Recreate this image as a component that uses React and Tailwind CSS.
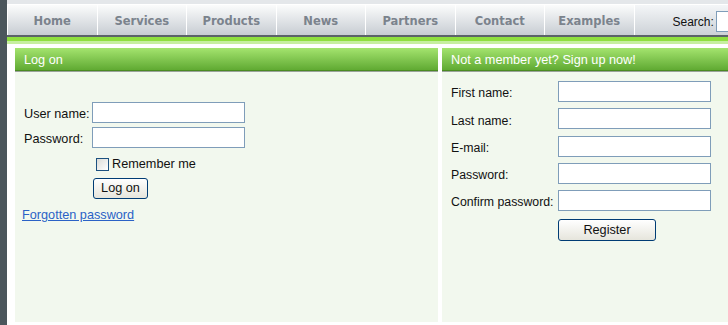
import React from "react";

const tabs = ["Home", "Services", "Products", "News", "Partners", "Contact", "Examples"];

const Field = ({ label, labelWidth, size = "text-[12.7px]" }) => (
  <div className="flex items-center">
    <span className={`${labelWidth} ${size} translate-y-[2px] text-[#111]`}>{label}</span>
    <input className="h-[21px] w-[153px] border border-[#7f9db9] bg-white outline-none" />
  </div>
);

const PanelHeader = ({ children }) => (
  <div className="h-[23px] border-b border-[#4b8a22] bg-gradient-to-b from-[#a4e46e] to-[#60aa32] pl-[9px] text-[12.7px] leading-[25px] text-white shadow-[0_1px_0_#9aa39a]">
    {children}
  </div>
);

export default function App() {
  return (
    <div className="flex h-[325px] w-[728px] overflow-hidden bg-white font-['Liberation_Sans',Arial,sans-serif]">
      <div className="w-[7px] shrink-0 bg-[#4b565c]" />
      <div className="flex min-w-0 flex-1 flex-col">
        <div className="h-[4px] bg-[#e4e7ea]" />
        <div className="flex h-[31px] border-l border-t border-white bg-gradient-to-b from-[#f4f6f8] to-[#cdd2d7]">
          {tabs.map((t) => (
            <div
              key={t}
              className="flex w-[89.5px] shrink-0 items-center justify-center border-r border-white bg-gradient-to-b from-[#fbfcfc] to-[#c8cdd3] pt-[4px] font-['DejaVu_Sans',sans-serif] text-[11.5px] font-bold text-[#7b838d]"
            >
              {t}
            </div>
          ))}
          <div className="flex min-w-0 flex-1 items-center pl-[38px] pt-[3px]">
            <span className="mr-[2px] text-[12px] text-[#111]">Search:</span>
            <input className="h-[21px] w-[40px] shrink-0 border border-[#7f9db9] bg-white" />
          </div>
        </div>
        <div className="h-[2px] bg-[#5c6369]" />
        <div className="h-[4px] bg-[#8fdf3f]" />
        <div className="h-[3px] bg-[#c6efa0]" />
        <div className="h-[4px]" />
        <div className="flex flex-1 gap-[4px] pl-[8px]">
          <div className="flex w-[423px] flex-col bg-[#f2f8ee]">
            <PanelHeader>Log on</PanelHeader>
            <div className="flex flex-col pl-[9px] pt-[31px]">
              <Field label="User name:" labelWidth="w-[68px]" />
              <div className="mt-[4px]">
                <Field label="Password:" labelWidth="w-[68px]" />
              </div>
              <label className="mt-[7px] ml-[72px] flex items-center text-[12.7px] text-[#111]">
                <span className="mr-[3px] h-[13px] w-[13px] border border-[#1c5180] bg-gradient-to-br from-[#dcdcd7] to-white" />
                Remember me
              </label>
              <button className="mt-[4px] ml-[69px] h-[21px] w-[55px] rounded-[3px] border border-[#003c74] bg-gradient-to-b from-white to-[#e6e5dc] text-[12.7px] text-[#111]">
                Log on
              </button>
              <a href="#" className="-ml-[2px] mt-[7px] w-fit text-[12.7px] text-[#2b62c6] underline">
                Forgotten password
              </a>
            </div>
          </div>
          <div className="flex flex-1 flex-col bg-[#f2f8ee]">
            <PanelHeader>Not a member yet? Sign up now!</PanelHeader>
            <div className="flex flex-col gap-[6.3px] pl-[9px] pt-[10px]">
              <Field label="First name:" labelWidth="w-[107px]" size="text-[12.3px]" />
              <Field label="Last name:" labelWidth="w-[107px]" size="text-[12.3px]" />
              <Field label="E-mail:" labelWidth="w-[107px]" size="text-[12.3px]" />
              <Field label="Password:" labelWidth="w-[107px]" size="text-[12.3px]" />
              <Field label="Confirm password:" labelWidth="w-[107px]" size="text-[12.3px]" />
              <button className="mt-[2px] ml-[107px] h-[22px] w-[98px] rounded-[3px] border border-[#003c74] bg-gradient-to-b from-white to-[#e6e5dc] text-[12.7px] text-[#111]">
                Register
              </button>
            </div>
          </div>
        </div>
        <div className="h-[3px]" />
      </div>
    </div>
  );
}
